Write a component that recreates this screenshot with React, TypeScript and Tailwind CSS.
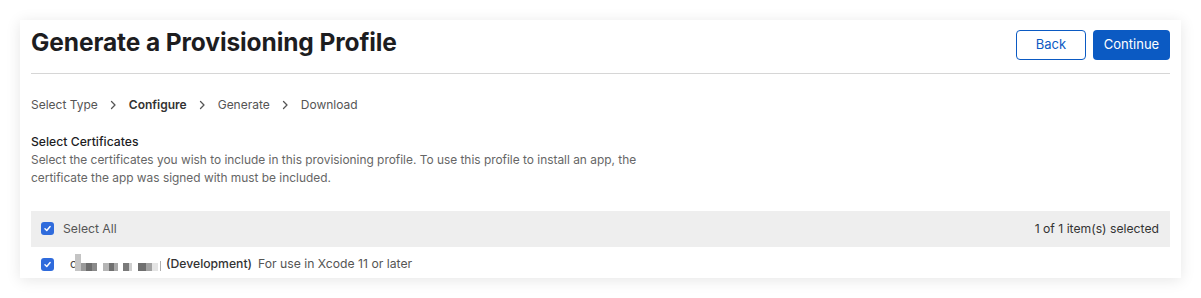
import React from 'react';

const font = { fontFamily: 'Inter, "Liberation Sans", sans-serif' };

const Check = () => (
  <span className="flex h-[13px] w-[13px] items-center justify-center rounded-[3px] bg-[#2f6bdc]">
    <svg width="9" height="9" viewBox="0 0 10 10" fill="none">
      <path d="M2.2 5.3 L4.2 7.2 L7.9 2.8" stroke="white" strokeWidth="1.6" strokeLinecap="round" strokeLinejoin="round" />
    </svg>
  </span>
);

const Chevron = () => (
  <svg width="7" height="10" viewBox="0 0 7 10" className="mx-[12px]" fill="none">
    <path d="M1.5 1.5 L5 5 L1.5 8.5" stroke="#555" strokeWidth="1.3" strokeLinecap="round" strokeLinejoin="round" />
  </svg>
);

// pixelated redaction of the certificate name
const Redacted = () => (
  <svg width="94" height="22" viewBox="0 0 94 22" className="shrink-0">
    <text x="0" y="15" fontSize="12" fill="#444" fontFamily="Inter, sans-serif">c</text>
    <rect x="5" y="1" width="6" height="17" fill="#c4c4c4" />
    <rect x="11" y="10" width="5" height="8" fill="#9a9a9a" />
    <rect x="16" y="10" width="6" height="8" fill="#6d6d6d" />
    <rect x="22" y="10" width="5" height="8" fill="#8a8a8a" />
    <rect x="33" y="10" width="6" height="8" fill="#b5b5b5" />
    <rect x="39" y="10" width="5" height="8" fill="#707070" />
    <rect x="44" y="10" width="4" height="8" fill="#a8a8a8" />
    <rect x="53" y="10" width="6" height="8" fill="#7a7a7a" />
    <rect x="59" y="10" width="3" height="8" fill="#cfcfcf" />
    <rect x="68" y="10" width="8" height="8" fill="#6f6f6f" />
    <rect x="76" y="10" width="6" height="8" fill="#a2a2a2" />
    <rect x="82" y="10" width="6" height="8" fill="#e4e4e4" />
    <rect x="90" y="8" width="1" height="10" fill="#b0b0b0" />
  </svg>
);

export default function App() {
  return (
    <div className="h-[298px] w-[1201px] bg-white pt-5 pl-5" style={font}>
      <div className="h-[258px] w-[1161px] overflow-hidden bg-white px-[11px] shadow-[0_2px_14px_rgba(0,0,0,0.1)]">
        {/* header */}
        <div className="flex h-[54px] items-start justify-between border-b border-[#d6d6d6]">
          <h1 className="mt-[6px] text-[24.5px] leading-[32px] font-bold tracking-[-0.1px] text-[#1d1d1f]">
            Generate a Provisioning Profile
          </h1>
          <div className="mt-[10px] flex gap-[7px]">
            <button className="h-[30px] w-[70px] rounded-[4px] border border-[#0b5ac3] text-[13px] text-[#0b5ac3]">
              Back
            </button>
            <button className="h-[30px] w-[77px] rounded-[4px] bg-[#0b5ac3] text-[13px] text-white">
              Continue
            </button>
          </div>
        </div>

        {/* steps */}
        <div className="mt-[22px] flex h-[18px] items-center text-[12px] leading-[18px] text-[#555]">
          <span>Select Type</span>
          <Chevron />
          <span className="font-semibold text-[#333]">Configure</span>
          <Chevron />
          <span>Generate</span>
          <Chevron />
          <span>Download</span>
        </div>

        {/* certificates */}
        <div className="mt-[19px] leading-[18px]">
          <div className="text-[12.2px] font-medium text-[#1d1d1f]">Select Certificates</div>
          <p className="text-[11.9px] text-[#666]">
            Select the certificates you wish to include in this provisioning profile. To use this profile to install an app, the
            <br />
            certificate the app was signed with must be included.
          </p>
        </div>

        <div className="mt-[24px] text-[12.2px]">
          <div className="flex h-9 items-center justify-between bg-[#eeeeee] pr-[11px] pl-[10px]">
            <div className="flex items-center gap-[9px]">
              <Check />
              <span className="text-[#555]">Select All</span>
            </div>
            <span className="text-[#333]">1 of 1 item(s) selected</span>
          </div>
          <div className="flex h-[34px] items-center pl-[10px]">
            <Check />
            <span className="ml-[16px] flex items-center">
              <Redacted />
            </span>
            <span className="ml-[2px] font-medium text-[#333]">(Development)</span>
            <span className="ml-[6px] text-[#555]">For use in Xcode 11 or later</span>
          </div>
        </div>
      </div>
    </div>
  );
}
